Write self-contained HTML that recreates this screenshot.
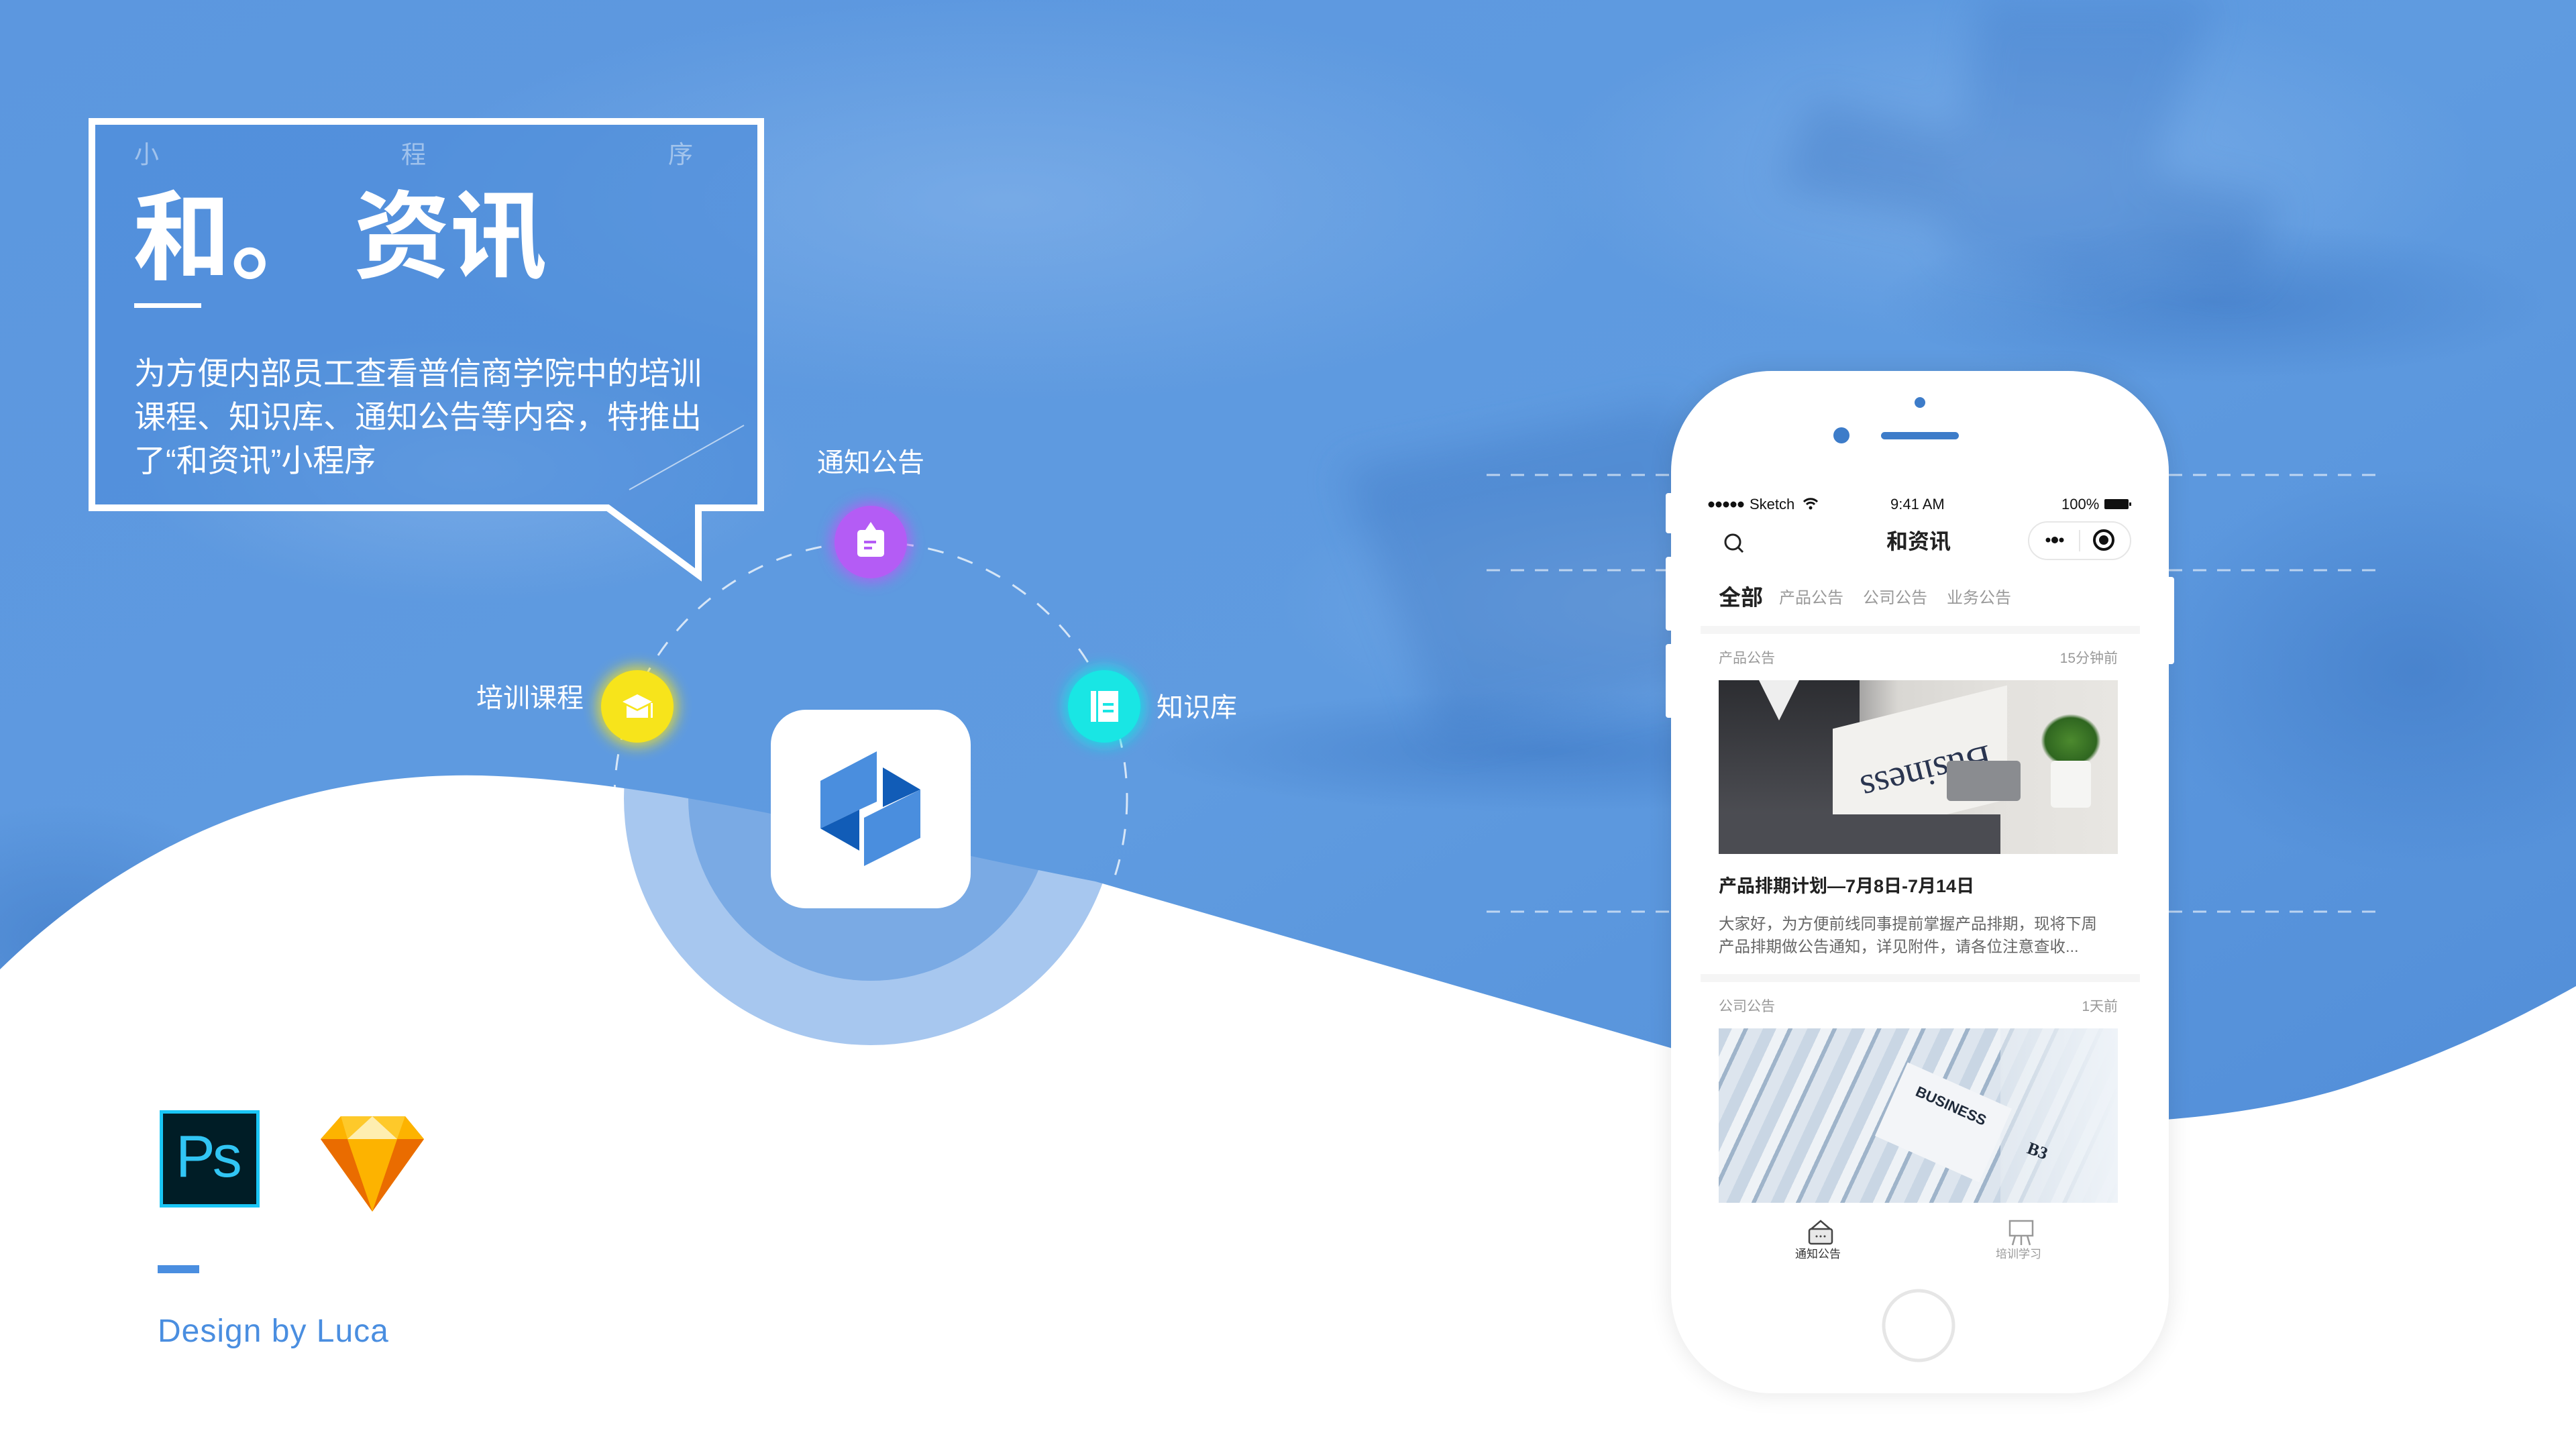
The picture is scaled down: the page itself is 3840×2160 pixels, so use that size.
<!DOCTYPE html>
<html><head><meta charset="utf-8"><style>
*{margin:0;padding:0;box-sizing:border-box}
body{width:3840px;height:2160px;overflow:hidden;position:relative;background:#fff;font-family:"Liberation Sans","Noto Sans CJK SC",sans-serif}
.abs{position:absolute;white-space:nowrap;line-height:1}
.cjk{font-family:"Liberation Sans","Noto Sans CJK SC",sans-serif}
</style></head><body>
<svg class="abs" style="left:0;top:0" width="3840" height="2160" viewBox="0 0 3840 2160">
<defs>
<linearGradient id="bg" x1="0" y1="0" x2="1" y2="1">
<stop offset="0" stop-color="#5c97df"/><stop offset="0.5" stop-color="#5f9be0"/><stop offset="1" stop-color="#4f8bd6"/></linearGradient>
<radialGradient id="lt1" cx="0.5" cy="0.5" r="0.5"><stop offset="0" stop-color="#8bb8ec" stop-opacity="0.55"/><stop offset="1" stop-color="#8bb8ec" stop-opacity="0"/></radialGradient>
<radialGradient id="dk1" cx="0.5" cy="0.5" r="0.5"><stop offset="0" stop-color="#3e78c4" stop-opacity="0.6"/><stop offset="1" stop-color="#3e78c4" stop-opacity="0"/></radialGradient>
<filter id="glow" x="-50%" y="-50%" width="200%" height="200%"><feGaussianBlur stdDeviation="10"/></filter>
<filter id="sh" x="-20%" y="-20%" width="140%" height="140%"><feGaussianBlur stdDeviation="18"/></filter>
<filter id="bl" x="-30%" y="-30%" width="160%" height="160%"><feGaussianBlur stdDeviation="30"/></filter>
<clipPath id="blueclip"><path d="M0,0 H3840 V1470 C3750,1520 3650,1570 3500,1620 C3250,1700 2800,1700 2490,1562 L1633,1314 C1300,1250 1000,1165 718,1156 C450,1150 200,1250 0,1445 Z"/></clipPath>
</defs>
<circle cx="1298" cy="1190" r="368" fill="#a7c7ef"/>
<circle cx="1298" cy="1190" r="272" fill="#7aaae4"/>
<g clip-path="url(#blueclip)">
<rect width="3840" height="2160" fill="url(#bg)"/>
<ellipse cx="1500" cy="300" rx="900" ry="300" fill="url(#lt1)"/>
<ellipse cx="3000" cy="250" rx="700" ry="260" fill="url(#lt1)"/>
<ellipse cx="2500" cy="900" rx="600" ry="200" fill="url(#lt1)"/>
<ellipse cx="3300" cy="450" rx="500" ry="120" fill="url(#dk1)"/>
<ellipse cx="2300" cy="1120" rx="600" ry="90" fill="url(#dk1)"/>
<ellipse cx="3600" cy="1000" rx="400" ry="300" fill="url(#dk1)"/>
<ellipse cx="100" cy="1400" rx="300" ry="200" fill="url(#dk1)"/>
<ellipse cx="700" cy="700" rx="500" ry="200" fill="url(#lt1)"/>
<g filter="url(#bl)" opacity="0.35">
<polygon points="2000,700 2500,600 2600,1000 2150,1100" fill="#3a72bd"/>
<polygon points="2700,150 3400,300 3350,420 2650,280" fill="#3a72bd"/>
<polygon points="2950,0 3300,0 3150,420 2900,380" fill="#3f79c6"/>
</g>
</g>
<circle cx="1298" cy="1190" r="382" fill="none" stroke="#fff" stroke-opacity="0.75" stroke-width="3" stroke-dasharray="24 22"/>
<path d="M137,181 H1134 V757 H1041 V857 L906,757 H137 Z" fill="#4a8bd9" fill-opacity="0.55" stroke="#fff" stroke-width="10"/>
<line x1="938" y1="730" x2="1109" y2="634" stroke="#fff" stroke-opacity="0.6" stroke-width="2"/>
<rect x="200" y="452" width="100" height="7" fill="#fff"/>
<g stroke="#fff" stroke-opacity="0.6" stroke-width="3" stroke-dasharray="20 16">
<line x1="2216" y1="708" x2="2491" y2="708"/><line x1="3233" y1="708" x2="3551" y2="708"/>
<line x1="2216" y1="850" x2="2491" y2="850"/><line x1="3233" y1="850" x2="3551" y2="850"/>
<line x1="2216" y1="1359" x2="2491" y2="1359"/><line x1="3233" y1="1359" x2="3551" y2="1359"/>
</g>
<circle cx="1298" cy="808" r="60" fill="#b65cf6" filter="url(#glow)" opacity="0.8"/>
<circle cx="1298" cy="808" r="54" fill="#b45cf5"/>
<g fill="#fff"><rect x="1278" y="790" width="40" height="40" rx="5"/><path d="M1290,790 L1298,778 L1306,790 Z"/></g>
<rect x="1288" y="806" width="18" height="4" fill="#b45cf5"/><rect x="1288" y="815" width="12" height="4" fill="#b45cf5"/>
<circle cx="950" cy="1053" r="60" fill="#f5e31a" filter="url(#glow)" opacity="0.8"/>
<circle cx="950" cy="1053" r="54" fill="#f7e41b"/>
<path d="M928,1046 L950,1035 L972,1046 L950,1057 Z" fill="#fff"/><path d="M934,1052 V1070 H966 V1052 L950,1060 Z" fill="#fff"/><rect x="970" y="1048" width="3" height="22" fill="#fff"/>
<circle cx="1646" cy="1053" r="60" fill="#18e5e5" filter="url(#glow)" opacity="0.8"/>
<circle cx="1646" cy="1053" r="54" fill="#19e6e4"/>
<rect x="1626" y="1030" width="8" height="46" fill="#fff"/><rect x="1637" y="1030" width="30" height="46" fill="#fff"/>
<rect x="1644" y="1048" width="16" height="4" fill="#19e6e4"/><rect x="1644" y="1058" width="16" height="4" fill="#19e6e4"/>
<rect x="1149" y="1058" width="298" height="296" rx="52" fill="#fff"/>
<polygon points="1223,1164 1307,1120 1307,1195 1281,1207 1223,1235" fill="#4a8ede"/>
<polygon points="1223,1235 1281,1207 1281,1268" fill="#115cb7"/>
<polygon points="1316,1144 1372,1177 1316,1203" fill="#115cb7"/>
<polygon points="1288,1219 1372,1177 1372,1249 1288,1291" fill="#4a8ede"/>
<rect x="2491" y="553" width="742" height="1524" rx="150" fill="#000" opacity="0.1" filter="url(#sh)"/>
<rect x="2483" y="735" width="12" height="60" rx="4" fill="#fff"/>
<rect x="2483" y="830" width="12" height="110" rx="4" fill="#fff"/>
<rect x="2483" y="960" width="12" height="110" rx="4" fill="#fff"/>
<rect x="3229" y="860" width="12" height="130" rx="4" fill="#fff"/>
<rect x="2491" y="553" width="742" height="1524" rx="150" fill="#fff"/>
<circle cx="2862" cy="600" r="8" fill="#3d7cc9"/>
<circle cx="2745" cy="649" r="12" fill="#3d7cc9"/>
<rect x="2804" y="644" width="116" height="11" rx="5.5" fill="#3d7cc9"/>
<circle cx="2860" cy="1976" r="52" fill="none" stroke="#e6e6e6" stroke-width="5"/>
<rect x="2535" y="933" width="655" height="12" fill="#f5f5f5"/>
<rect x="2535" y="1452" width="655" height="12" fill="#f5f5f5"/>
<g fill="#111"><circle cx="2551" cy="752" r="4.5"/><circle cx="2562" cy="752" r="4.5"/><circle cx="2573" cy="752" r="4.5"/><circle cx="2584" cy="752" r="4.5"/><circle cx="2595" cy="752" r="4.5"/>
<rect x="3137" y="744" width="36" height="15" rx="2"/><rect x="3174" y="749" width="3" height="5"/></g>
<path d="M2689,748 a14,14 0 0 1 20,0 M2693,752 a8,8 0 0 1 12,0" stroke="#111" stroke-width="3" fill="none"/><circle cx="2699" cy="757" r="2.5" fill="#111"/>
<circle cx="2583" cy="808" r="11" fill="none" stroke="#222" stroke-width="3"/><line x1="2591" y1="816" x2="2598" y2="823" stroke="#222" stroke-width="3"/>
<rect x="3024" y="778" width="152" height="56" rx="28" fill="#fff" stroke="#e6e6e6" stroke-width="2"/>
<line x1="3100" y1="790" x2="3100" y2="822" stroke="#e6e6e6" stroke-width="2"/>
<g fill="#111"><circle cx="3053" cy="805" r="3.5"/><circle cx="3063" cy="805" r="5"/><circle cx="3073" cy="805" r="3.5"/></g>
<circle cx="3136" cy="805" r="14" fill="none" stroke="#111" stroke-width="4"/><circle cx="3136" cy="805" r="7" fill="#111"/>
<g fill="none" stroke="#444" stroke-width="2.5"><rect x="2697" y="1832" width="34" height="22" rx="3" fill="#e8e8e8"/><path d="M2700,1832 L2714,1820 L2728,1832"/></g>
<g fill="#444"><circle cx="2708" cy="1843" r="1.5"/><circle cx="2714" cy="1843" r="1.5"/><circle cx="2720" cy="1843" r="1.5"/></g>
<g fill="none" stroke="#999" stroke-width="2.5"><rect x="2996" y="1820" width="34" height="22"/><path d="M3004,1842 L3000,1856 M3013,1842 L3013,1856 M3022,1842 L3026,1856"/></g>
</svg>

<div class="abs" style="left:2562px;top:1014px;width:595px;height:259px;overflow:hidden;background:linear-gradient(90deg,#3a3b40 0%,#4a4b50 18%,#d9d7d3 45%,#e3e1dd 70%,#e8e6e2 100%)">
 <div class="abs" style="left:0;top:0;width:210px;height:259px;background:linear-gradient(180deg,#2c2d31,#55565c)"></div>
 <div class="abs" style="left:60px;top:0;width:60px;height:60px;background:#eee;clip-path:polygon(0 0,100% 0,50% 100%)"></div>
 <div class="abs" style="left:170px;top:40px;width:260px;height:170px;background:#f2f1ee;transform:skewY(-14deg)"></div>
 <div class="abs cjk" style="left:210px;top:110px;font-family:'Liberation Serif',serif;font-size:56px;color:#2a3550;transform:rotate(166deg)">Business</div>
 <div class="abs" style="left:340px;top:120px;width:110px;height:60px;background:#8a8c90;border-radius:6px"></div>
 <div class="abs" style="left:480px;top:50px;width:90px;height:80px;background:radial-gradient(#4c8a2e,#2f6620 60%,transparent 70%)"></div>
 <div class="abs" style="left:495px;top:120px;width:60px;height:70px;background:#f5f5f3;border-radius:6px"></div>
 <div class="abs" style="left:0;top:200px;width:420px;height:59px;background:#4b4c52"></div>
</div>
<div class="abs" style="left:2562px;top:1533px;width:595px;height:260px;overflow:hidden;background:repeating-linear-gradient(115deg,#c9d6e4 0 18px,#eef2f6 18px 34px,#9fb4ca 34px 40px,#dde5ee 40px 60px)">
 <div class="abs" style="left:420px;top:0;width:175px;height:260px;background:linear-gradient(90deg,rgba(230,236,242,0.6),#eef3f8)"></div>
 <div class="abs" style="left:250px;top:80px;width:170px;height:120px;background:#f3f5f8;transform:rotate(24deg)"></div>
 <div class="abs" style="left:290px;top:105px;font-size:22px;font-weight:bold;color:#1f2a3a;transform:rotate(24deg)">BUSINESS</div>
 <div class="abs" style="left:460px;top:170px;font-family:'Liberation Serif',serif;font-size:26px;font-weight:bold;color:#1f2a3a;transform:rotate(20deg)">B3</div>
</div>

<div class="abs" style="left:200px;top:212px;font-size:37px;color:rgba(255,255,255,0.45)">小</div>
<div class="abs" style="left:598px;top:212px;font-size:37px;color:rgba(255,255,255,0.45)">程</div>
<div class="abs" style="left:996px;top:212px;font-size:37px;color:rgba(255,255,255,0.45)">序</div>
<div class="abs" style="left:198px;top:282px;font-size:146px;font-weight:bold;color:#fff">和。</div>
<div class="abs" style="left:527px;top:282px;font-size:144px;font-weight:bold;color:#fff">资讯</div>
<div class="abs" style="left:200px;top:524px;font-size:47px;line-height:65px;color:#fff;white-space:normal;width:880px">为方便内部员工查看普信商学院中的培训<br>课程、知识库、通知公告等内容，特推出<br>了“和资讯”小程序</div>

<div class="abs" style="left:1218px;top:670px;font-size:40px;color:#fff">通知公告</div>
<div class="abs" style="left:710px;top:1021px;font-size:40px;color:#fff">培训课程</div>
<div class="abs" style="left:1724px;top:1035px;font-size:40px;color:#fff">知识库</div>

<div class="abs" style="left:2608px;top:741px;font-size:22px;color:#111">Sketch</div>
<div class="abs" style="left:2818px;top:741px;font-size:22px;color:#111">9:41 AM</div>
<div class="abs" style="left:3073px;top:741px;font-size:22px;color:#111">100%</div>
<div class="abs" style="left:2812px;top:791px;font-size:32px;font-weight:bold;color:#222">和资讯</div>
<div class="abs" style="left:2562px;top:874px;font-size:33px;font-weight:bold;color:#222">全部</div>
<div class="abs" style="left:2652px;top:880px;font-size:24px;color:#999">产品公告</div>
<div class="abs" style="left:2777px;top:880px;font-size:24px;color:#999">公司公告</div>
<div class="abs" style="left:2902px;top:880px;font-size:24px;color:#999">业务公告</div>
<div class="abs" style="left:2562px;top:971px;font-size:21px;color:#999">产品公告</div>
<div class="abs" style="left:3070px;top:971px;font-size:21px;color:#999;width:87px;text-align:right">15分钟前</div>
<div class="abs" style="left:2562px;top:1308px;font-size:27px;font-weight:bold;color:#222">产品排期计划—7月8日-7月14日</div>
<div class="abs" style="left:2562px;top:1360px;font-size:23.5px;line-height:34px;color:#666">大家好，为方便前线同事提前掌握产品排期，现将下周<br>产品排期做公告通知，详见附件，请各位注意查收...</div>
<div class="abs" style="left:2562px;top:1490px;font-size:21px;color:#999">公司公告</div>
<div class="abs" style="left:3097px;top:1490px;font-size:21px;color:#999;width:60px;text-align:right">1天前</div>
<div class="abs" style="left:2676px;top:1861px;font-size:17px;color:#333">通知公告</div>
<div class="abs" style="left:2975px;top:1861px;font-size:17px;color:#999">培训学习</div>

<div class="abs" style="left:238px;top:1655px;width:149px;height:145px;background:#001d26;border:5px solid #1ac6f5"></div>
<div class="abs" style="left:262px;top:1680px;font-size:88px;color:#31c5f4;letter-spacing:-4px">Ps</div>
<svg class="abs" style="left:476px;top:1660px" width="160" height="150" viewBox="0 0 160 150">
<polygon points="2,38 32,4 128,4 156,38 79,146" fill="#fdad00"/>
<polygon points="2,38 156,38 79,146" fill="#f7a600"/>
<polygon points="2,38 42,38 79,146" fill="#ea6c00"/>
<polygon points="116,38 156,38 79,146" fill="#ea6c00"/>
<polygon points="42,38 116,38 79,146" fill="#fdb300"/>
<polygon points="32,4 79,4 42,38" fill="#fec92a"/><polygon points="79,4 128,4 116,38" fill="#fec92a"/>
<polygon points="79,4 42,38 116,38" fill="#feeeb0"/>
<polygon points="2,38 32,4 42,38" fill="#fdb300"/><polygon points="156,38 128,4 116,38" fill="#fdb300"/>
</svg>
<div class="abs" style="left:235px;top:1886px;width:62px;height:12px;background:#4a8ee0"></div>
<div class="abs" style="left:235px;top:1961px;font-size:48px;letter-spacing:1px;color:#4a8ee0">Design by Luca</div>
</body></html>
